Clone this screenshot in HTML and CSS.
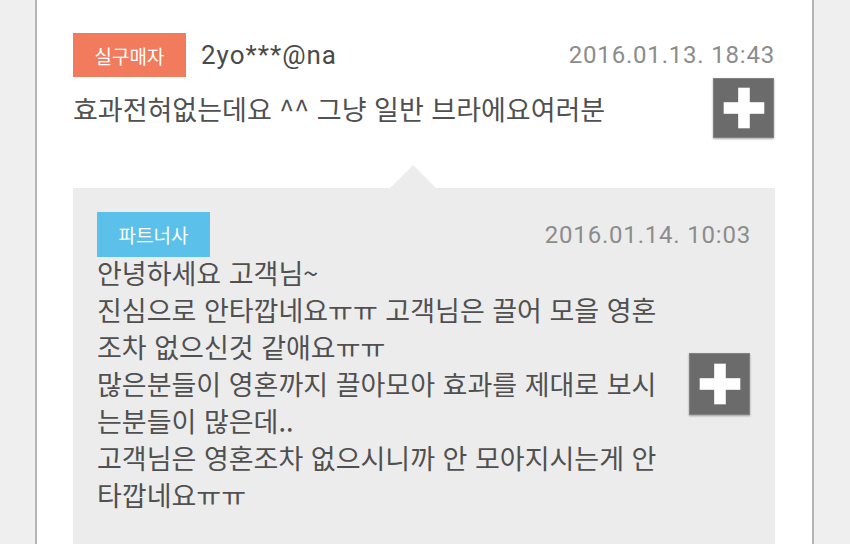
FILE: index.html
```html
<!DOCTYPE html>
<html lang="ko">
<head>
    <meta charset="UTF-8">
    <meta name="viewport" content="width=device-width, initial-scale=1.0">
    <title>상품 후기</title>
    <link rel="stylesheet" href="styles.css">
</head>
<body>

<div class="card">
    <div class="comment">
        <div class="comment-head">
            <span class="badge badge-buyer">실구매자</span>
            <span class="user">2yo***@na</span>
            <span class="date">2016.01.13. 18:43</span>
        </div>
        <div class="comment-body">
            <p class="text">효과전혀없는데요 ^^ 그냥 일반 브라에요여러분</p>
            <button class="more" aria-label="더보기">
                <svg viewBox="0 0 61 60" width="61" height="60">
                    <rect x="10" y="24" width="42" height="12" fill="#fff"/>
                    <rect x="25" y="9" width="12" height="42" fill="#fff"/>
                </svg>
            </button>
        </div>
    </div>

    <div class="reply">
        <div class="comment-head">
            <span class="badge badge-partner">파트너사</span>
            <span class="date">2016.01.14. 10:03</span>
        </div>
        <div class="comment-body reply-body">
            <p class="text">안녕하세요 고객님~<br>
                진심으로 안타깝네요ㅠㅠ 고객님은 끌어 모을 영혼<br>
                조차 없으신것 같애요ㅠㅠ<br>
                많은분들이 영혼까지 끌아모아 효과를 제대로 보시<br>
                는분들이 많은데..<br>
                고객님은 영혼조차 없으시니까 안 모아지시는게 안<br>
                타깝네요ㅠㅠ</p>
            <button class="more" aria-label="더보기">
                <svg viewBox="0 0 61 60" width="61" height="60">
                    <rect x="10" y="24" width="42" height="12" fill="#fff"/>
                    <rect x="25" y="9" width="12" height="42" fill="#fff"/>
                </svg>
            </button>
        </div>
    </div>
</div>

</body>
</html>
```
FILE: styles.css
```css
html, body {
    height: 544px;
    overflow: hidden;
}
body {
    margin: 0;
    padding: 0;
    background-color: #efefef;
    font-family: 'Roboto', 'Noto Sans CJK KR', sans-serif;
    color: #4a4a4a;
}
.card {
    box-sizing: border-box;
    margin-left: 35px;
    width: 779px;
    min-height: 544px;
    background-color: #fff;
    border-left: 2px solid #b4b4b4;
    border-right: 2px solid #b4b4b4;
    padding: 33px 37px 0 36px;
}
.comment-head {
    display: flex;
    align-items: center;
}
.badge {
    width: 113px;
    height: 44px;
    display: flex;
    align-items: center;
    justify-content: center;
    color: #fff;
    font-family: 'Noto Sans CJK KR', sans-serif;
    font-size: 19px;
}
.badge-buyer {
    background-color: #f27a5d;
}
.badge-partner {
    background-color: #5bc1ea;
    height: 45px;
}
.user {
    margin-left: 15px;
    font-size: 26px;
    letter-spacing: 1px;
    color: #4a4a4a;
}
.date {
    margin-left: auto;
    font-size: 24px;
    letter-spacing: 0.8px;
    color: #8c8c8c;
}
.comment-body {
    display: flex;
    align-items: center;
    justify-content: space-between;
    margin-top: 1px;
}
.text {
    margin: 0;
    font-family: 'Noto Sans CJK KR', sans-serif;
    font-size: 27px;
    line-height: 37px;
    color: #505050;
}
.more {
    width: 61px;
    height: 60px;
    padding: 0;
    margin-right: 1px;
    border: 1px solid #828282;
    background-color: #6b6b6b;
    box-shadow: 0 1px 2px rgba(0,0,0,0.35);
    flex-shrink: 0;
}
.more svg {
    display: block;
    width: 100%;
    height: 100%;
}
.reply {
    position: relative;
    margin-top: 50px;
    background-color: #ececec;
    padding: 24px 24px 40px 24px;
}
.reply::before {
    content: '';
    position: absolute;
    top: -23px;
    left: 317px;
    border-left: 23px solid transparent;
    border-right: 23px solid transparent;
    border-bottom: 23px solid #ececec;
}
.reply-body {
    margin-top: -3px;
}
.reply-body .more {
    height: 62px;
}
```
